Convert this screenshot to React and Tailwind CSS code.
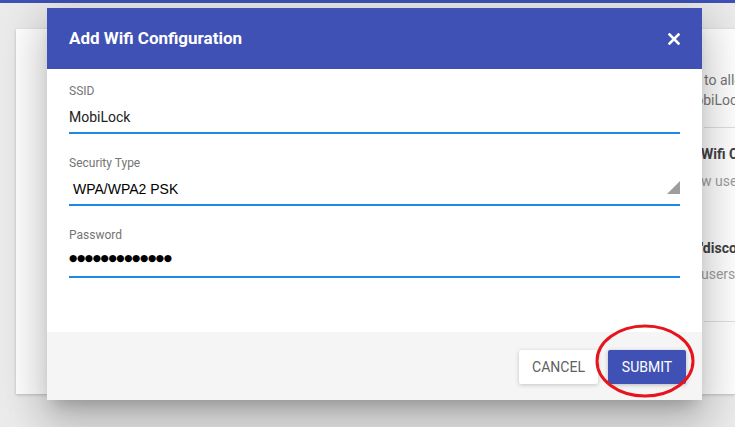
import React from "react";

function Field({ label, children, right }) {
  return (
    <div className="flex flex-col">
      <div className="text-[12px] leading-[14px] text-[#757575]">{label}</div>
      <div className="relative mt-[7px] h-[24px] leading-[24px] text-[14px] text-[#212121]">
        {children}
        {right}
      </div>
      <div className="mt-[3px] h-[2px] bg-[#1e88e5]" />
    </div>
  );
}

export default function App() {
  return (
    <div
      className="relative w-[735px] h-[427px] overflow-hidden bg-[#ebebeb]"
      style={{ fontFamily: "Roboto, 'Liberation Sans', sans-serif" }}
    >
      <div className="h-[3px] bg-[#3f51b5]" />
      {/* background card */}
      <div className="ml-[16px] mt-[26px] h-[365px] bg-white shadow-[0_1px_3px_rgba(0,0,0,0.2)] flex flex-col pl-[688px] overflow-hidden">
        <div className="h-[99px] border-b border-[#e0e0e0] flex flex-col pt-[41px] text-[14px] leading-[20px] whitespace-nowrap">
          <div className="text-[#757575]">to allow</div>
          <div className="text-[#757575] -ml-[21px]">MobiLock</div>
        </div>
        <div className="h-[194px] border-b border-[#e0e0e0] flex flex-col pt-[16px] text-[14px] leading-[20px] whitespace-nowrap">
          <div className="font-bold text-[#424242] -ml-[3px]">Wifi Config</div>
          <div className="mt-[7px] text-[#9e9e9e] -ml-[3px]">w users</div>
          <div className="mt-[47px] font-bold text-[#424242] -ml-[3px]">'disconnect</div>
          <div className="mt-[6px] text-[#9e9e9e] -ml-[3px]">users</div>
        </div>
      </div>

      {/* dialog */}
      <div className="absolute left-[47px] top-[8px] w-[655px] h-[392px] flex flex-col bg-white shadow-[0_11px_15px_-7px_rgba(0,0,0,0.2),0_24px_38px_3px_rgba(0,0,0,0.14),0_9px_46px_8px_rgba(0,0,0,0.12)]">
        <div className="h-[61px] bg-[#3f51b5] flex items-center justify-between px-[22px]">
          <div className="text-white font-bold text-[17px] pt-[1px]">Add Wifi Configuration</div>
          <svg width="12" height="12" viewBox="0 0 12 12">
            <path d="M1.5 1.5 L10.5 10.5 M10.5 1.5 L1.5 10.5" stroke="white" strokeWidth="2.6" strokeLinecap="square" />
          </svg>
        </div>
        <div className="flex-1 flex flex-col gap-[22px] px-[22px] pt-[15px]">
          <Field label="SSID">MobiLock</Field>
          <Field
            label="Security Type"
            right={
              <svg width="13" height="13" viewBox="0 0 13 13" className="absolute right-0 top-[4px]">
                <polygon points="13,0 13,13 0,13" fill="#9e9e9e" />
              </svg>
            }
          >
            <span className="pl-[4px] text-black" style={{ fontFamily: "'Liberation Sans', Arial, sans-serif" }}>
              WPA/WPA2 PSK
            </span>
          </Field>
          <Field label="Password">
            <span
              className="block text-black text-[9.5px] leading-[18px] tracking-[-0.4px]"
              style={{ fontFamily: "'DejaVu Sans', sans-serif" }}
            >
              ●●●●●●●●●●●●●
            </span>
          </Field>
        </div>
        <div className="h-[68px] bg-[#f5f5f5] flex justify-end items-start pt-[18px] pr-[16px] gap-[10px]">
          <button className="h-[34px] w-[79px] rounded-[2px] bg-white text-[#616161] text-[14px] shadow-[0_1px_4px_rgba(0,0,0,0.2)]">
            CANCEL
          </button>
          <button className="h-[34px] w-[78px] rounded-[2px] bg-[#3f51b5] text-white text-[14px] shadow-[0_1px_4px_rgba(0,0,0,0.25)]">
            SUBMIT
          </button>
        </div>
      </div>

      {/* red annotation ellipse */}
      <svg className="absolute left-[590px] top-[320px]" width="112" height="84" viewBox="0 0 112 84">
        <ellipse cx="55" cy="41" rx="48" ry="35" fill="none" stroke="#e8141c" strokeWidth="3" />
      </svg>
    </div>
  );
}
